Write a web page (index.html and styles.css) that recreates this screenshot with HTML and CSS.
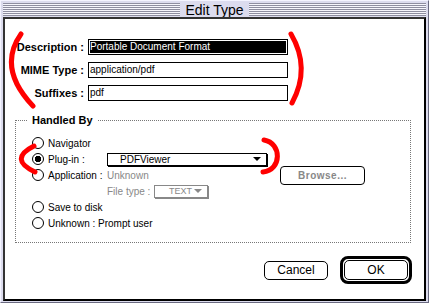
FILE: index.html
```html
<!DOCTYPE html>
<html lang="en">
<head>
    <meta charset="UTF-8">
    <meta name="viewport" content="width=device-width, initial-scale=1.0">
    <title>Edit Type</title>
    <link rel="stylesheet" href="styles.css">
</head>
<body>
    <div class="window">
        <div class="titlebar">
            <span class="stripes"></span>
            <span class="title">Edit Type</span>
            <span class="stripes"></span>
        </div>
        <div class="content">
            <div class="fields">
                <label class="field-label">Description :</label>
                <div class="field selected">Portable Document Format</div>
                <label class="field-label">MIME Type :</label>
                <div class="field">application/pdf</div>
                <label class="field-label">Suffixes :</label>
                <div class="field">pdf</div>
            </div>

            <fieldset class="group">
                <legend>Handled By</legend>
                <div class="option"><span class="radio"></span><span>Navigator</span></div>
                <div class="option">
                    <span class="radio checked"></span>
                    <span class="opt-label">Plug-in :</span>
                    <div class="popup">PDFViewer<span class="arrow"></span></div>
                </div>
                <div class="option">
                    <span class="radio"></span>
                    <span class="opt-label">Application :</span>
                    <span class="dim">Unknown</span>
                    <button class="browse">Browse...</button>
                </div>
                <div class="option sub">
                    <span class="dim type-label">File type :</span>
                    <div class="popup small disabled">TEXT<span class="arrow"></span></div>
                </div>
                <div class="option"><span class="radio"></span><span>Save to disk</span></div>
                <div class="option"><span class="radio"></span><span>Unknown : Prompt user</span></div>
            </fieldset>

            <div class="actions">
                <button class="btn">Cancel</button>
                <span class="default-ring"><button class="btn">OK</button></span>
            </div>
        </div>
    </div>

    <!-- red pen marks drawn over the dialog -->
    <svg class="marks" width="429" height="303" viewBox="0 0 429 303">
        <path d="M21 34 Q -3 68 33 106" />
        <path d="M291 34 Q 311 68 292 103" />
        <path d="M34 146 Q 8 159 35 172" />
        <path d="M264 140 C 282 143, 282 170, 263 172" />
    </svg>
</body>
</html>
```

FILE: styles.css
```css
body {
    margin: 0;
    background: #dcdcee;
    font-family: 'Liberation Sans', Arial, sans-serif;
    color: #000;
}
.window {
    width: 429px;
    height: 303px;
    box-sizing: border-box;
    border: 1px solid;
    border-color: #f4f4ff #6a6a80 #6a6a80 #f4f4ff;
    padding: 2px 2px 1px;
    display: flex;
    flex-direction: column;
    background: #dcdcee;
}
.titlebar {
    height: 14px;
    display: flex;
}
.stripes {
    flex: 1;
    margin-bottom: 1px;
    background: repeating-linear-gradient(to bottom, #8e8ea0 0 1px, #f6f6fc 1px 2px);
}
.title {
    padding: 0 5px;
    font-size: 14px;
    line-height: 14px;
}
.content {
    flex: 1;
    background: #fff;
    border: 2px solid;
    border-color: #333 #000 #000 #333;
    display: flex;
    flex-direction: column;
}
.fields {
    display: grid;
    grid-template-columns: 79px 200px;
    grid-auto-rows: 16px;
    column-gap: 4px;
    row-gap: 7px;
    margin-top: 20px;
}
.field-label {
    font-weight: bold;
    font-size: 11px;
    line-height: 16px;
    text-align: right;
}
.field {
    border: 1px solid #000;
    box-sizing: border-box;
    padding-left: 1px;
    font-size: 10px;
    line-height: 14px;
}
.field.selected {
    background: #000;
    color: #fff;
    box-shadow: inset 0 0 0 1px #fff;
}
.group {
    margin: 12px 13px 0 10px;
    border: 1px dotted #777;
    padding: 8px 0 11px 16px;
}
.group legend {
    font-weight: bold;
    font-size: 11px;
    line-height: 14px;
    padding: 0 4px;
    margin-left: -4px;
}
.option {
    display: flex;
    align-items: center;
    height: 16px;
    font-size: 10px;
}
.radio {
    flex: none;
    width: 12px;
    height: 12px;
    box-sizing: border-box;
    border: 1px solid #000;
    border-radius: 50%;
    margin-right: 4px;
}
.radio.checked {
    background: radial-gradient(circle, #000 0 3px, transparent 3.5px);
}
.opt-label {
    flex: none;
    width: 59px;
}
.dim {
    color: #888;
}
.popup {
    width: 160px;
    height: 13px;
    box-sizing: border-box;
    border: 1px solid #000;
    box-shadow: 1px 1px 0 #000;
    padding: 0 5px 0 12px;
    display: flex;
    align-items: center;
    justify-content: space-between;
    font-size: 10px;
}
.arrow {
    border: 4px solid transparent;
    border-top-color: currentColor;
    border-bottom: 0;
}
.sub {
    padding-left: 75px;
}
.type-label {
    width: 47px;
    flex: none;
}
.popup.small {
    width: 54px;
    padding-left: 14px;
    font-size: 9px;
}
.popup.disabled {
    color: #888;
    border-color: #888;
    box-shadow: 1px 1px 0 #888;
}
.browse {
    margin-left: auto;
    margin-right: 45px;
    width: 85px;
    height: 19px;
    padding: 0;
    border: 1px solid #000;
    border-radius: 4px;
    background: #fff;
    color: #888;
    font: bold 10px 'Liberation Sans', Arial, sans-serif;
    letter-spacing: 0.5px;
}
.actions {
    display: flex;
    justify-content: flex-end;
    align-items: center;
    gap: 12px;
    margin: 13px 12px 0 0;
}
.btn {
    width: 64px;
    height: 19px;
    padding: 0;
    border: 1px solid #000;
    border-radius: 5px;
    background: #fff;
    color: #000;
    font: 12px 'Liberation Sans', Arial, sans-serif;
}
.default-ring {
    display: flex;
    border: 3px solid #000;
    border-radius: 8px;
    padding: 1px;
}
.default-ring .btn {
    height: 20px;
}
.marks {
    position: absolute;
    top: 0;
    left: 0;
    pointer-events: none;
}
.marks path {
    fill: none;
    stroke: #ff0000;
    stroke-width: 5;
    stroke-linecap: round;
}
```
